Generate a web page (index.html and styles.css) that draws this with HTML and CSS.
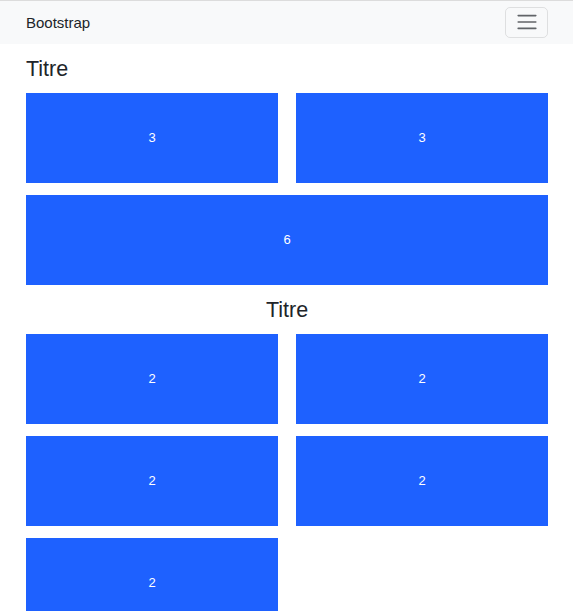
FILE: index.html
```html
<!DOCTYPE html>
<html lang="fr">
<head>
<meta charset="utf-8">
<title>Bootstrap</title>
<link rel="stylesheet" href="styles.css">
</head>
<body>
<nav class="navbar">
  <span class="brand">Bootstrap</span>
  <button class="toggler" type="button" aria-label="Menu">
    <svg class="toggler-icon" viewBox="0 0 30 30" width="24" height="24"><path d="M4 7h22M4 15h22M4 23h22" stroke="rgba(33,37,41,0.7)" stroke-width="2" stroke-linecap="round" fill="none"/></svg>
  </button>
</nav>
<main class="container">
  <h4 class="title">Titre</h4>
  <div class="grid">
    <div class="box">3</div>
    <div class="box">3</div>
    <div class="box span2">6</div>
  </div>
  <h4 class="title center">Titre</h4>
  <div class="grid">
    <div class="box">2</div>
    <div class="box">2</div>
    <div class="box">2</div>
    <div class="box">2</div>
    <div class="box">2</div>
  </div>
</main>
</body>
</html>
```

FILE: styles.css
```css
* { box-sizing: border-box; }
html, body {
  margin: 0;
  padding: 0;
  background: #fff;
  color: #212529;
  font-family: "Liberation Sans", Arial, sans-serif;
}
.navbar {
  border-top: 1px solid #dcdcdc;
  background: #f8f9fa;
  height: 44px;
  display: flex;
  align-items: center;
  justify-content: space-between;
  padding: 0 25px 0 26px;
}
.brand {
  font-size: 15px;
  color: #212529;
}
.toggler {
  width: 43px;
  height: 31px;
  margin-top: -1px;
  border: 1px solid rgba(0,0,0,0.1);
  border-radius: 5px;
  background: transparent;
  padding: 0;
  display: flex;
  align-items: center;
  justify-content: center;
}
.toggler-icon { display: block; }
.container {
  padding: 0 25px 0 26px;
}
.title {
  font-size: 21.5px;
  font-weight: 500;
  line-height: 1.2;
  margin: 13px 0 10px;
}
.title.center { text-align: center; }
.grid {
  display: grid;
  grid-template-columns: 1fr 1fr;
  column-gap: 18px;
  row-gap: 12px;
}
.box {
  height: 90px;
  background: #1e61ff;
  color: #fff;
  font-size: 13px;
  display: flex;
  align-items: center;
  justify-content: center;
}
.span2 { grid-column: span 2; }
```
